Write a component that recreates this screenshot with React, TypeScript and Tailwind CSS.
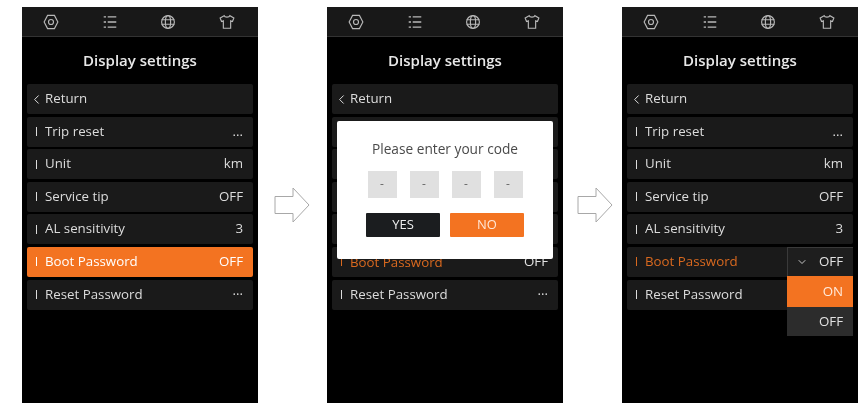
import { ChevronDown, ChevronLeft } from "lucide-react";

const rows = [
  { label: "Trip reset", value: "..." },
  { label: "Unit", value: "km" },
  { label: "Service tip", value: "OFF" },
  { label: "AL sensitivity", value: "3" },
  { label: "Boot Password", value: "OFF" },
  { label: "Reset Password", value: "···" },
];

type Mode = "active" | "dialog" | "dropdown";

function TopBar() {
  return (
    <div className="flex h-[30px] items-center justify-between border-b border-[#333] bg-[#181818] pl-[21px] pr-[23px] text-[#b8b8b8]">
      <svg width="16" height="16" viewBox="0 0 14 14" fill="none" stroke="currentColor" strokeWidth="1">
        <path d="M4 1.200h6L13 7l-3 5.800H4L1 7z" />
        <circle cx="7" cy="7" r="2.200" />
      </svg>
      <svg width="16" height="16" viewBox="0 0 14 14" fill="none" stroke="currentColor" strokeWidth="1.100">
        <path d="M1.500 2.500h2M5 2.500h7.500M1.500 7h2M5 7h7.500M1.500 11.500h2M5 11.500h7.500" />
      </svg>
      <svg width="16" height="16" viewBox="0 0 14 14" fill="none" stroke="currentColor" strokeWidth="1">
        <circle cx="7" cy="7" r="5.600" />
        <ellipse cx="7" cy="7" rx="2.300" ry="5.600" />
        <path d="M1.400 5h11.200M1.400 9h11.200" />
      </svg>
      <svg width="16" height="16" viewBox="0 0 14 14" fill="none" stroke="currentColor" strokeWidth="1">
        <path d="M4.500 1.500 1 3.500l1.200 3 1.600-.6v6.600h6.400V5.900l1.600.6 1.200-3-3.500-2c-.5 1.600-4.500 1.600-5 0z" />
      </svg>
    </div>
  );
}

function Phone({ mode }: { mode: Mode }) {
  return (
    <div className="relative h-[396px] w-[236px] shrink-0 bg-black">
      <TopBar />
      <div className="flex h-[46px] items-center justify-center text-[15px] font-semibold text-[#e8e8e8]">
        Display settings
      </div>
      <div className="flex flex-col gap-[2.600px] px-[5px] pt-[1px]">
        <div className="flex h-[30px] items-center rounded-[2px] bg-[#1a1a1a] pl-[2px] text-[13.300px] font-medium text-[#dcdcdc]">
          <ChevronLeft size={15} strokeWidth={1.600} className="mr-[1px]" />
          Return
        </div>
        {rows.map((row) => {
          const boot = row.label === "Boot Password";
          const filled = boot && mode === "active";
          // rows under the dialog are hidden, the dropdown covers the right side
          const coveredRow = mode === "dialog" && !boot && row.label !== "Reset Password";
          const coveredValue = mode === "dropdown" && (boot || row.label === "Reset Password");
          return (
            <div
              key={row.label}
              className={`flex h-[30px] items-center justify-between rounded-[2px] pl-[9px] pr-[10px] text-[13.300px] font-medium ${
                filled ? "bg-[#f37321] text-white" : boot ? "bg-[#1a1a1a] text-[#d9691f]" : "bg-[#1a1a1a] text-[#dcdcdc]"
              }`}
            >
              {!coveredRow && (
                <span className="flex items-center">
                  <span className="mr-[8px] h-[9px] w-px bg-current" />
                  {mode === "dialog" && boot ? <span className="relative top-[1px]">{row.label}</span> : row.label}
                </span>
              )}
              {!coveredRow && !coveredValue && (
                <span className={boot && !filled ? "text-[#e2e2e2]" : ""}>{row.value}</span>
              )}
            </div>
          );
        })}
      </div>

      {mode === "dialog" && (
        <div className="absolute left-[10px] top-[114px] flex h-[138px] w-[216px] flex-col items-center rounded-[2px] bg-white">
          <div className="mt-[18px] text-[13.700px] font-medium text-[#4a4a4a]">Please enter your code</div>
          <div className="mt-[11px] flex gap-[13px]">
            {[0, 1, 2, 3].map((i) => (
              <div key={i} className="flex h-[27px] w-[29px] items-center justify-center bg-[#e0e0e0] text-[12px] text-[#666]">
                -
              </div>
            ))}
          </div>
          <div className="mt-[15px] flex gap-[10px]">
            <div className="flex h-[24px] w-[74px] items-center justify-center rounded-[1px] bg-[#1b1d1f] text-[13px] font-medium text-[#eee]">
              YES
            </div>
            <div className="flex h-[24px] w-[74px] items-center justify-center rounded-[1px] bg-[#f37321] text-[13px] font-medium text-[#ffe6d4]">
              NO
            </div>
          </div>
        </div>
      )}

      {mode === "dropdown" && (
        <div className="absolute left-[165px] top-[240px] w-[66px] text-[13.300px] font-medium text-[#e2e2e2]">
          <div className="flex h-[29px] items-center justify-end gap-[11px] border-l border-t border-[#3a3a3a] bg-[#1e1e1e] pr-[10px]">
            <ChevronDown size={12} strokeWidth={1.700} />
            OFF
          </div>
          <div className="flex h-[31px] items-center justify-end bg-[#f37321] pr-[10px] text-[#ffeadb]">ON</div>
          <div className="flex h-[29px] items-center justify-end bg-[#2c2c2c] pr-[10px]">OFF</div>
        </div>
      )}
    </div>
  );
}

function Arrow() {
  return (
    <svg width="36" height="36" viewBox="0 0 36 36" fill="none" stroke="#a8a8a8" strokeWidth="1" className="shrink-0">
      <path d="M1 9.500h18V1L35 18 19 35v-8.500H1z" />
    </svg>
  );
}

export default function App() {
  return (
    <div className="flex h-[411px] w-[865px] items-start overflow-hidden bg-white pl-[22px] pt-[7px] font-['Open_Sans',sans-serif] blur-[0.3px]">
      <Phone mode="active" />
      <div className="flex h-[396px] w-[69px] items-center justify-center pr-[2px]">
        <Arrow />
      </div>
      <Phone mode="dialog" />
      <div className="flex h-[396px] w-[59px] items-center justify-center pl-[4px]">
        <Arrow />
      </div>
      <Phone mode="dropdown" />
    </div>
  );
}
